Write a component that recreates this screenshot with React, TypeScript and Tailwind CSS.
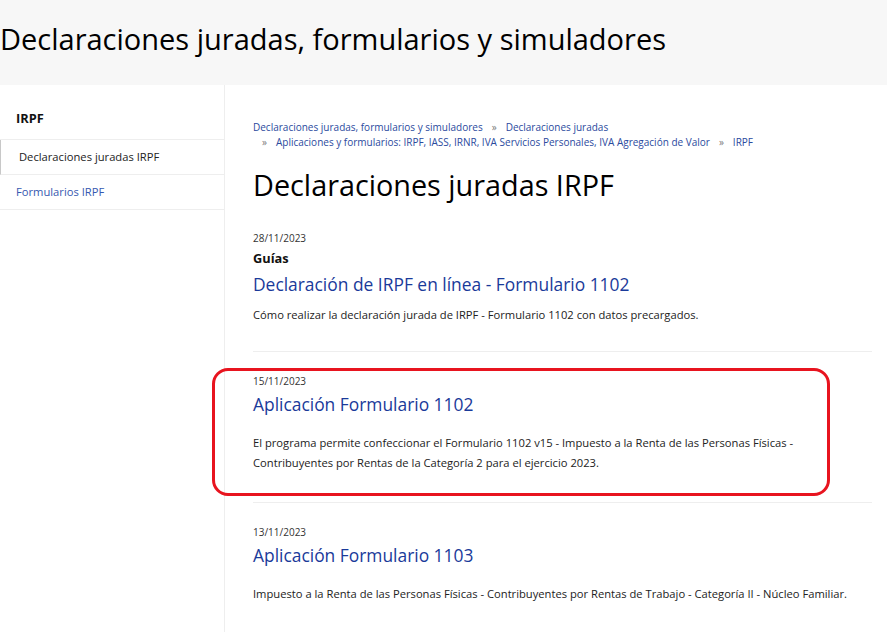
const crumbsTop = [
  { label: 'Declaraciones juradas, formularios y simuladores' },
  { label: 'Declaraciones juradas' },
];

const crumbsBottom = [
  { label: 'Aplicaciones y formularios: IRPF, IASS, IRNR, IVA Servicios Personales, IVA Agregación de Valor' },
  { label: 'IRPF' },
];

function Sep() {
  return <span className="mx-[9px] text-[10px] text-[#7a7a7a]">»</span>;
}

function SideNav() {
  return (
    <aside className="w-[225px] shrink-0 border-r border-[#eeeeee]">
      <div className="border-b border-[#eeeeee] pl-4 pt-[24px] pb-[12px] text-[12.8px] leading-[18px] font-bold text-[#111]">IRPF</div>
      <div className="border-b border-l border-[#eeeeee] border-l-[#c8c8c8] py-[7px] pl-[18px] text-[11.2px] leading-[20px] text-[#222]">
        Declaraciones juradas IRPF
      </div>
      <div className="border-b border-[#eeeeee] py-[7px] pl-4 text-[11.2px] leading-[20px] text-[#3558b0]">Formularios IRPF</div>
    </aside>
  );
}

function Breadcrumb() {
  return (
    <nav className="text-[10px] leading-[15px] text-[#2b4a9e]">
      <div>
        {crumbsTop.map((c, i) => (
          <span key={c.label}>
            {i > 0 ? <Sep /> : null}
            {c.label}
          </span>
        ))}
      </div>
      <div>
        {crumbsBottom.map((c) => (
          <span key={c.label}>
            <Sep />
            {c.label}
          </span>
        ))}
      </div>
    </nav>
  );
}

export default function App() {
  return (
    <div className="min-h-[632px] bg-white font-['Open_Sans',sans-serif] text-[#222]">
      <header className="h-[85px] bg-[#f7f7f7] pt-[19px]">
        <h1 className="text-[29px] leading-[40px] text-black">Declaraciones juradas, formularios y simuladores</h1>
      </header>

      <div className="flex min-h-[547px]">
        <SideNav />

        <main className="flex-1 pl-[28px] pr-[15px] pt-[35px]">
          <Breadcrumb />

          <h2 className="mt-[17px] text-[28.8px] leading-[35px] text-black">Declaraciones juradas IRPF</h2>

          <article className="mt-[29px] border-b border-[#eeeeee] pb-[26px]">
            <div className="text-[10px] leading-[14px] text-[#333]">28/11/2023</div>
            <div className="mt-[4px] text-[12.8px] leading-[18px] font-bold text-[#111]">Guías</div>
            <div className="mt-[5px] text-[17.4px] leading-[24px] text-[#1a3a9a]">Declaración de IRPF en línea - Formulario 1102</div>
            <p className="mt-[9px] text-[11.2px] leading-[20px]">
              Cómo realizar la declaración jurada de IRPF - Formulario 1102 con datos precargados.
            </p>
          </article>

          <article className="relative border-b border-[#eeeeee] pt-[22px] pb-[29px]">
            <div className="text-[10px] leading-[14px] text-[#333]">15/11/2023</div>
            <div className="mt-[4px] text-[17.4px] leading-[24px] text-[#1a3a9a]">Aplicación Formulario 1102</div>
            <p className="mt-[17px] text-[11.2px] leading-[20px]">
              El programa permite confeccionar el Formulario 1102 v15 - Impuesto a la Renta de las Personas Físicas -
              <br />
              Contribuyentes por Rentas de la Categoría 2 para el ejercicio 2023.
            </p>
            <div className="absolute -left-[41px] top-[16px] h-[128px] w-[618px] rounded-[16px] border-[3.5px] border-[#e8141f]" />
          </article>

          <article className="pt-[22px]">
            <div className="text-[10px] leading-[14px] text-[#333]">13/11/2023</div>
            <div className="mt-[4px] text-[17.4px] leading-[24px] text-[#1a3a9a]">Aplicación Formulario 1103</div>
            <p className="mt-[17px] text-[11.2px] leading-[20px]">
              Impuesto a la Renta de las Personas Físicas - Contribuyentes por Rentas de Trabajo - Categoría II - Núcleo Familiar.
            </p>
          </article>
        </main>
      </div>
    </div>
  );
}
